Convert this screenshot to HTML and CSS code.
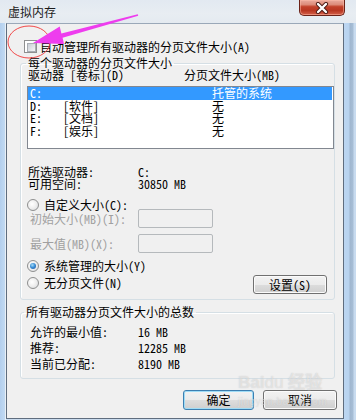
FILE: index.html
```html
<!DOCTYPE html>
<html lang="zh-CN">
<head>
    <meta charset="UTF-8">
    <meta name="viewport" content="width=device-width, initial-scale=1.0">
    <title>虚拟内存</title>
    <link rel="stylesheet" href="styles.css">
</head>
<body>
    <div class="window">
        <div class="titlebar">
            <span class="title">虚拟内存</span>
            <div class="close-btn">
                <svg width="18" height="12" viewBox="0 0 18 12">
                    <path d="M5 2 L13 10 M13 2 L5 10" stroke="#4a1a14" stroke-width="4.2" stroke-linecap="round"/>
                    <path d="M5 2 L13 10 M13 2 L5 10" stroke="#ffffff" stroke-width="2.4" stroke-linecap="round"/>
                </svg>
            </div>
        </div>

        <div class="client">
            <label class="check-row"><span class="checkbox"></span>自动管理所有驱动器的分页文件大小(A)</label>

            <fieldset class="group group-drives">
                <legend>每个驱动器的分页文件大小</legend>
                <div class="list-head">
                    <span>驱动器 [卷标](D)</span>
                    <span>分页文件大小(MB)</span>
                </div>
                <div class="listbox">
                    <div class="list-row selected"><span>C:</span><span></span><span>托管的系统</span></div>
                    <div class="list-row"><span>D:</span><span>[软件]</span><span>无</span></div>
                    <div class="list-row"><span>E:</span><span>[文档]</span><span>无</span></div>
                    <div class="list-row"><span>F:</span><span>[娱乐]</span><span>无</span></div>
                </div>

                <div class="info-row first"><span>所选驱动器:</span><span>C:</span></div>
                <div class="info-row"><span>可用空间:</span><span>30850 MB</span></div>

                <label class="radio-row custom"><span class="radio"></span>自定义大小(C):</label>
                <div class="field-row first"><span>初始大小(MB)(I):</span><span class="textbox"></span></div>
                <div class="field-row"><span>最大值(MB)(X):</span><span class="textbox"></span></div>

                <label class="radio-row managed"><span class="radio checked"></span>系统管理的大小(Y)</label>
                <div class="set-row">
                    <label class="radio-row"><span class="radio"></span>无分页文件(N)</label>
                    <button type="button" class="btn set-btn">设置(S)</button>
                </div>
            </fieldset>

            <fieldset class="group group-total">
                <legend>所有驱动器分页文件大小的总数</legend>
                <div class="total-row first"><span>允许的最小值:</span><span>16 MB</span></div>
                <div class="total-row"><span>推荐:</span><span>12285 MB</span></div>
                <div class="total-row"><span>当前已分配:</span><span>8190 MB</span></div>
            </fieldset>

            <div class="dialog-buttons">
                <button type="button" class="btn default ok-btn">确定</button>
                <button type="button" class="btn cancel-btn">取消</button>
            </div>
        </div>

        <!-- 标注：圆圈 + 箭头 -->
        <svg class="annotation" width="356" height="420" viewBox="0 0 356 420">
            <ellipse cx="29" cy="42" rx="21" ry="16" fill="none" stroke="#f04848" stroke-width="1"/>
            <polygon points="33,43 64,44 62.6,37.7 138.2,15.7 137.8,14.3 61.4,33.6 59.7,26.6" fill="#ee3dee"/>
        </svg>

        <div class="watermark">
            <div class="wm-logo">Bai<span class="wm-du">du</span> 经验</div>
            <div class="wm-url">jingyan.baidu.com</div>
        </div>
    </div>
</body>
</html>
```

FILE: styles.css
```css
* {
    box-sizing: border-box;
}

body {
    margin: 0;
    background: #b9d1ea;
    font-family: "Noto Sans Mono CJK SC", "Noto Sans CJK SC", sans-serif;
    font-size: 12px;
    line-height: 12px;
    color: #000;
}

.window {
    position: relative;
    width: 356px;
    height: 420px;
    overflow: hidden;
    background: linear-gradient(to right,
        #b3cfee 0, #c2daf2 5px, #e9f0f7 5px, #e9f0f7 6px,
        #c9dbee 6px, #c9dbee 344px,
        #bcd6f1 344px, #b8d3ef 349px, #9fb6cf 350px, #a7bed6 353px, #c8dbef 354px);
}

/* 标题栏 */
.titlebar {
    height: 23px;
    display: flex;
    justify-content: space-between;
    align-items: flex-start;
    background: linear-gradient(#e2e9f1, #e8edf2 60%, #e4eaf0);
}

.title {
    margin: 5px 0 0 8px;
    font-family: "Noto Sans CJK SC", sans-serif;
    font-size: 12px;
    line-height: 13px;
    color: #1b1b1b;
}

.close-btn {
    width: 46px;
    height: 16px;
    margin-right: 11px;
    display: flex;
    justify-content: center;
    align-items: center;
    border: 1px solid #6b2218;
    border-top: none;
    border-radius: 0 0 5px 5px;
    background: linear-gradient(#e9ab9e 0, #dd8c7a 30%, #c2412a 45%, #b83722 70%, #d3604a 100%);
    box-shadow: inset 0 0 0 1px rgba(255, 190, 170, 0.5);
}

/* 客户区 */
.client {
    width: 338px;
    height: 396px;
    margin-left: 6px;
    background: #f0f0f0;
    border: 1px solid #5f6d7e;
    border-top-color: #9aa8b8;
}

.check-row {
    display: flex;
    align-items: center;
    gap: 3px;
    height: 13px;
    margin: 16px 0 0 17px;
}

.checkbox {
    width: 13px;
    height: 13px;
    border: 1px solid #8e8f8f;
    background: #fff;
    padding: 2px;
}

.checkbox::before {
    content: "";
    display: block;
    width: 7px;
    height: 7px;
    border: 1px solid #a9adb3;
    background: linear-gradient(135deg, #c9ced5, #f4f5f6);
}

/* 分组框 */
.group {
    margin: 4px 8px 0 13px;
    border: 1px solid #d5dfe5;
    border-radius: 3px;
    box-shadow: inset 1px 1px 0 #fff;
    min-width: 0;
}

.group legend {
    padding: 0 2px;
    line-height: 12px;
}

.group-drives {
    padding: 0 0 5px 6px;
}

.group-drives legend {
    margin-left: -1px;
}

.list-head {
    display: grid;
    grid-template-columns: 156px 1fr;
    height: 12px;
    padding-left: 1px;
}

.listbox {
    margin-top: 5px;
    height: 63px;
    border: 1px solid #828790;
    background: #fff;
}

.list-row {
    display: grid;
    grid-template-columns: 33px 149px 1fr;
    height: 12.5px;
    line-height: 12.5px;
    padding-left: 2px;
    margin-right: 1px;
}

.list-row.selected {
    background: #3399ff;
    color: #fff;
}

.info-row {
    display: grid;
    grid-template-columns: 110px 1fr;
    height: 12px;
    padding-left: 1px;
}

.info-row.first {
    margin-top: 17px;
}

.radio-row {
    display: flex;
    align-items: center;
    gap: 5px;
    height: 12px;
}

.radio-row.custom {
    margin-top: 9px;
}

.radio-row.managed {
    margin-top: 7px;
}

.radio {
    width: 12px;
    height: 12px;
    border-radius: 50%;
    border: 1px solid #8e8f8f;
    background: radial-gradient(circle at 40% 40%, #fff 0, #f0f0f0 45%, #d6d8db 100%);
    display: flex;
    justify-content: center;
    align-items: center;
}

.radio.checked::before {
    content: "";
    width: 6px;
    height: 6px;
    border-radius: 50%;
    background: radial-gradient(circle at 40% 35%, #a9dcf7 0, #3a8fd6 45%, #1d4f9a 100%);
}

.field-row {
    display: grid;
    grid-template-columns: 108px 75px;
    align-items: center;
    height: 19px;
    padding-left: 3px;
    color: #a0a0a0;
}

.field-row.first {
    margin-top: -2px;
}

.field-row + .field-row {
    margin-top: 6px;
}

.textbox {
    height: 19px;
    border: 1px solid #b5b9bc;
    border-radius: 2px;
    background: #f0f0f0;
}

.set-row {
    display: flex;
    justify-content: space-between;
    align-items: flex-start;
    margin-top: 3px;
    height: 19px;
}

.set-row .radio-row {
    margin-top: 2px;
}

/* 按钮 */
.btn {
    height: 19px;
    padding: 0;
    border: 1px solid #707070;
    border-radius: 3px;
    background: linear-gradient(#f2f2f2 0, #ebebeb 50%, #dddddd 50%, #cfcfcf 100%);
    box-shadow: inset 0 0 0 1px #fbfbfb;
    font: inherit;
    color: #000;
}

.set-btn {
    width: 74px;
    margin-right: 7px;
}

.group-total {
    margin-top: 6px;
    padding: 0 0 8px 9px;
}

.group-total legend {
    margin-left: -6px;
}

.total-row {
    display: grid;
    grid-template-columns: 108px 1fr;
    height: 12px;
    margin-top: 4px;
}

.total-row.first {
    margin-top: 8px;
}

.dialog-buttons {
    display: flex;
    justify-content: flex-end;
    gap: 9px;
    margin: 11px 6px 0 0;
}

.dialog-buttons .btn {
    height: 20px;
}

.ok-btn {
    width: 71px;
}

.cancel-btn {
    width: 74px;
}

.btn.default {
    border-color: #3c7fb1;
    box-shadow: inset 0 0 0 1px #9fdcf6;
}

/* 标注与水印 */
.annotation {
    position: absolute;
    left: 0;
    top: 0;
    pointer-events: none;
}

.watermark {
    position: absolute;
    left: 238px;
    top: 374px;
    pointer-events: none;
    color: rgba(255, 255, 255, 0.45);
    text-shadow: 0 0 1px rgba(120, 120, 120, 0.35);
    font-family: "Liberation Sans", sans-serif;
}

.wm-logo {
    font-size: 17px;
    line-height: 18px;
    font-weight: bold;
}

.wm-logo .wm-du {
    font-weight: normal;
}

.wm-url {
    font-size: 10px;
    line-height: 12px;
    margin-top: 4px;
    letter-spacing: 0.5px;
}
```
